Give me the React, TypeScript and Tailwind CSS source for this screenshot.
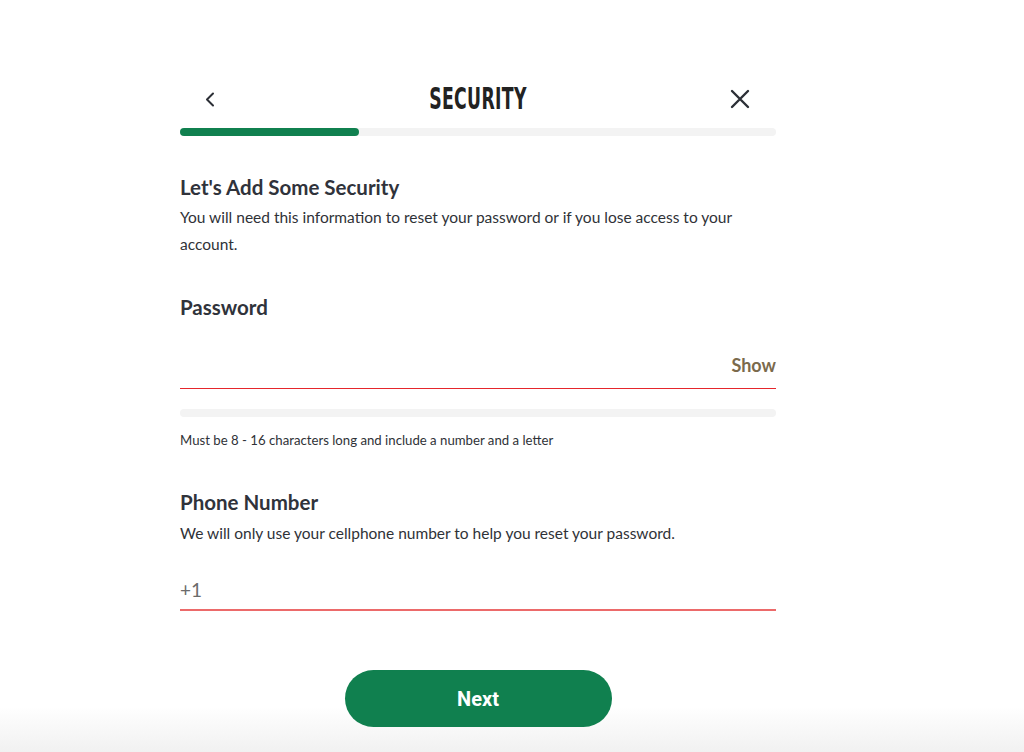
import React, { useState } from 'react';

const body = { fontFamily: 'Lato, "Open Sans", sans-serif' };

const App: React.FC = () => {
  const [password, setPassword] = useState('');
  const [phone, setPhone] = useState('');
  const [showPassword, setShowPassword] = useState(false);

  return (
    <div className="min-h-[752px] w-full bg-gradient-to-b from-white from-[94%] to-[#f1f1f1] flex justify-center text-[#2f3237]" style={body}>
      <div className="w-[596px] ml-[-68px] pt-[82px] flex flex-col">
        {/* Header */}
        <div className="h-[34px] grid grid-cols-[72px_1fr_72px] items-center">
          <button className="h-[34px] pl-[25px] flex items-center text-[#2c2f36]" aria-label="Back">
            <svg width="10" height="15" viewBox="0 0 10 15" fill="none">
              <path d="M8 1.5L2 7.5L8 13.5" stroke="currentColor" strokeWidth="2" strokeLinecap="round" strokeLinejoin="round" />
            </svg>
          </button>
          <h1
            className="text-center text-[30px] leading-[34px] font-bold tracking-[0.5px] text-[#222] scale-x-[0.64]"
            style={{ fontFamily: '"DejaVu Sans Condensed", "Liberation Sans Narrow", sans-serif' }}
          >
            SECURITY
          </h1>
          <button className="h-[34px] flex items-center justify-center text-[#2c2f36]" aria-label="Close">
            <svg width="20" height="20" viewBox="0 0 20 20" fill="none">
              <path d="M2 2L18 18M18 2L2 18" stroke="currentColor" strokeWidth="2.4" strokeLinecap="round" />
            </svg>
          </button>
        </div>

        {/* Progress */}
        <div className="mt-[12px] h-[8px] rounded-full bg-[#f3f3f3]">
          <div className="h-full w-[30%] rounded-full bg-[#10804f]" />
        </div>

        {/* Intro */}
        <h2 className="mt-[38px] text-[20.5px] font-bold leading-[26px] text-[#30333b]">Let's Add Some Security</h2>
        <p className="mt-[4px] text-[15.5px] leading-[27px] text-[#2f3237]">
          You will need this information to reset your password or if you lose access to your account.
        </p>

        {/* Password */}
        <h2 className="mt-[36px] text-[20.5px] font-bold leading-[26px] text-[#30333b]">Password</h2>
        <div className="mt-[29px] flex items-end border-b border-[#e5262c] pb-[12px]">
          <input
            type={showPassword ? 'text' : 'password'}
            value={password}
            onChange={(e) => setPassword(e.target.value)}
            className="flex-1 bg-transparent outline-none text-[18px]"
          />
          <button
            onClick={() => setShowPassword((s) => !s)}
            className="text-[18px] font-bold leading-[22px] text-[#7b6a4c]"
          >
            {showPassword ? 'Hide' : 'Show'}
          </button>
        </div>
        <div className="mt-[20px] h-[8px] rounded-full bg-[#f3f3f3]" />
        <p className="mt-[14px] text-[13.2px] leading-[18px] text-[#2f3237]">
          Must be 8 - 16 characters long and include a number and a letter
        </p>

        {/* Phone */}
        <h2 className="mt-[40px] text-[20.5px] font-bold leading-[26px] text-[#30333b]">Phone Number</h2>
        <p className="mt-[7px] text-[15.5px] leading-[22px] text-[#2f3237]">
          We will only use your cellphone number to help you reset your password.
        </p>
        <div className="mt-[32px] flex items-center border-b-[2px] border-[#ec6a6a] pb-[6px]">
          <span className="text-[19px] leading-[24px] text-[#6b6b6b]">+1</span>
          <input
            type="tel"
            value={phone}
            onChange={(e) => setPhone(e.target.value)}
            className="flex-1 ml-2 bg-transparent outline-none text-[18px]"
          />
        </div>

        {/* Next */}
        <div className="mt-[59px] flex justify-center">
          <button
            className="w-[267px] h-[57px] rounded-full bg-[#10804f] text-white text-[20px] font-bold"
            style={{ fontFamily: 'Roboto, sans-serif' }}
          >
            Next
          </button>
        </div>
      </div>
    </div>
  );
};

export default App;
